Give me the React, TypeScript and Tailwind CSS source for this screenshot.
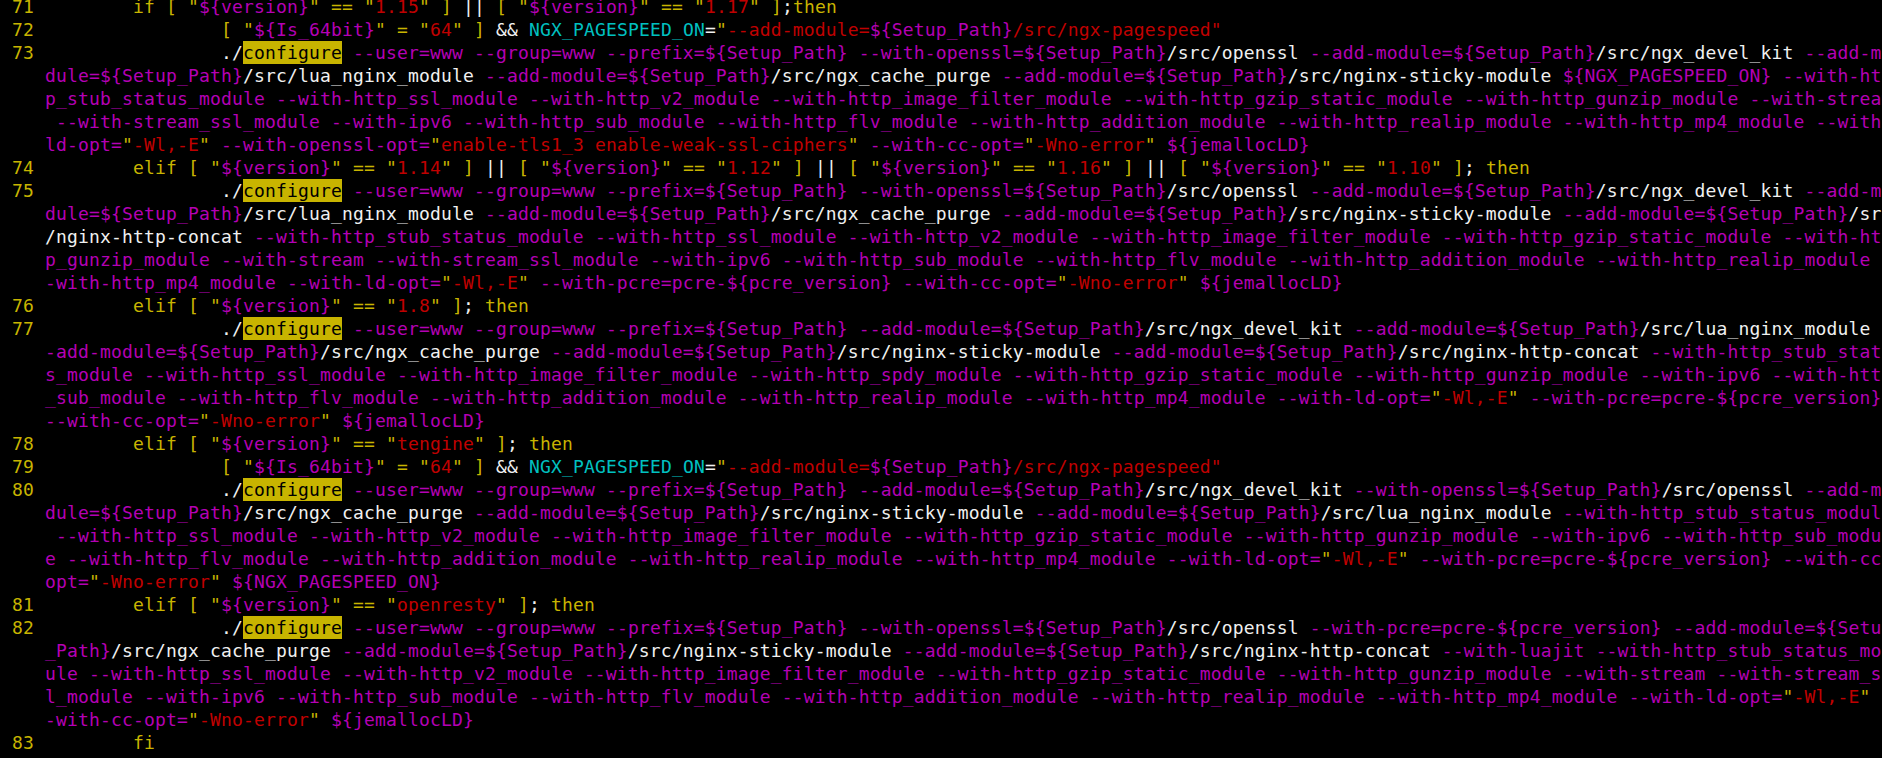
const WRAP = 168;

const common = '--user=www --group=www --prefix=${Setup_Path}';
const mod = (name: string) => `--add-module=\${Setup_Path}/src/${name}`;
const ssl = '--with-openssl=${Setup_Path}/src/openssl';
const tail = '--with-http_sub_module --with-http_flv_module --with-http_addition_module --with-http_realip_module --with-http_mp4_module --with-ld-opt="-Wl,-E"';
const pagespeed = '\t\t[ "${Is_64bit}" = "64" ] && NGX_PAGESPEED_ON="--add-module=${Setup_Path}/src/ngx-pagespeed"';

const source: [number, string][] = [
  [71, '\tif [ "${version}" == "1.15" ] || [ "${version}" == "1.17" ];then'],
  [72, pagespeed],
  [73, `\t\t./configure ${common} ${ssl} ${mod('ngx_devel_kit')} ${mod('lua_nginx_module')} ${mod('ngx_cache_purge')} ${mod('nginx-sticky-module')} \${NGX_PAGESPEED_ON} --with-http_stub_status_module --with-http_ssl_module --with-http_v2_module --with-http_image_filter_module --with-http_gzip_static_module --with-http_gunzip_module --with-stream --with-stream_ssl_module --with-ipv6 ${tail} --with-openssl-opt="enable-tls1_3 enable-weak-ssl-ciphers" --with-cc-opt="-Wno-error" \${jemallocLD}`],
  [74, '\telif [ "${version}" == "1.14" ] || [ "${version}" == "1.12" ] || [ "${version}" == "1.16" ] || [ "${version}" == "1.10" ]; then'],
  [75, `\t\t./configure ${common} ${ssl} ${mod('ngx_devel_kit')} ${mod('lua_nginx_module')} ${mod('ngx_cache_purge')} ${mod('nginx-sticky-module')} ${mod('nginx-http-concat')} --with-http_stub_status_module --with-http_ssl_module --with-http_v2_module --with-http_image_filter_module --with-http_gzip_static_module --with-http_gunzip_module --with-stream --with-stream_ssl_module --with-ipv6 ${tail} --with-pcre=pcre-\${pcre_version} --with-cc-opt="-Wno-error" \${jemallocLD}`],
  [76, '\telif [ "${version}" == "1.8" ]; then'],
  [77, `\t\t./configure ${common} ${mod('ngx_devel_kit')} ${mod('lua_nginx_module')} ${mod('ngx_cache_purge')} ${mod('nginx-sticky-module')} ${mod('nginx-http-concat')} --with-http_stub_status_module --with-http_ssl_module --with-http_image_filter_module --with-http_spdy_module --with-http_gzip_static_module --with-http_gunzip_module --with-ipv6 ${tail} --with-pcre=pcre-\${pcre_version} --with-cc-opt="-Wno-error" \${jemallocLD}`],
  [78, '\telif [ "${version}" == "tengine" ]; then'],
  [79, pagespeed],
  [80, `\t\t./configure ${common} ${mod('ngx_devel_kit')} ${ssl} ${mod('ngx_cache_purge')} ${mod('nginx-sticky-module')} ${mod('lua_nginx_module')} --with-http_stub_status_module --with-http_ssl_module --with-http_v2_module --with-http_image_filter_module --with-http_gzip_static_module --with-http_gunzip_module --with-ipv6 ${tail} --with-pcre=pcre-\${pcre_version} --with-cc-opt="-Wno-error" \${NGX_PAGESPEED_ON}`],
  [81, '\telif [ "${version}" == "openresty" ]; then'],
  [82, `\t\t./configure ${common} ${ssl} --with-pcre=pcre-\${pcre_version} ${mod('ngx_cache_purge')} ${mod('nginx-sticky-module')} ${mod('nginx-http-concat')} --with-luajit --with-http_stub_status_module --with-http_ssl_module --with-http_v2_module --with-http_image_filter_module --with-http_gzip_static_module --with-http_gunzip_module --with-stream --with-stream_ssl_module --with-ipv6 ${tail} --with-cc-opt="-Wno-error" \${jemallocLD}`],
  [83, '\tfi'],
];

const YELLOW = 'text-[#c8b400]';
const MAGENTA = 'text-[#b400b4]';
const RED = 'text-[#c00000]';
const CYAN = 'text-[#00c0c0]';
const WHITE = 'text-[#f0f0f0]';
const MATCH = 'inline-block bg-[#c8b400] text-black';

type Cell = { ch: string; cls: string };

// rough copy of vim's sh highlighting, only what these lines need
function highlight(line: string): Cell[] {
  const text = line.replace(/\t/g, '        ');
  const re = /"|\$\{[^}]*\}|--[^\s"$]*|\/src\/\S+|configure|NGX_PAGESPEED_ON|\b(?:if|elif|then|fi)\b|==|=|\[|\]|\s+|./g;
  const cells: Cell[] = [];
  let quoted = false;
  for (const m of text.matchAll(re)) {
    const tok = m[0];
    let cls = WHITE;
    if (tok === '"') {
      cls = YELLOW;
      quoted = !quoted;
    } else if (tok.startsWith('${') || tok.startsWith('--') && !quoted) cls = MAGENTA;
    else if (quoted) cls = RED;
    else if (tok === 'configure') cls = MATCH;
    else if (tok === 'NGX_PAGESPEED_ON') cls = CYAN;
    else if (/^(if|elif|then|fi|==|\[|\])$/.test(tok)) cls = YELLOW;
    else if (tok === '=') cls = text[m.index - 1] === ' ' ? YELLOW : WHITE;
    else if (!tok.trim()) cls = '';
    for (const ch of tok) cells.push({ ch, cls });
  }
  return cells;
}

function Row({ num, cells }: { num?: number; cells: Cell[] }) {
  const spans: Cell[] = [];
  for (const c of cells) {
    const last = spans[spans.length - 1];
    if (last && last.cls === c.cls) last.ch += c.ch;
    else spans.push({ ...c });
  }
  return (
    <div className="flex h-[23px] whitespace-pre leading-[23px]">
      <span className={`w-[44px] shrink-0 pl-[11px] ${YELLOW}`}>{num}</span>
      <span>
        {spans.map((s, i) => <span key={i} className={s.cls}>{s.ch}</span>)}
      </span>
    </div>
  );
}

export default function App() {
  return (
    <div className="h-[758px] w-[1882px] overflow-hidden bg-black font-['DejaVu_Sans_Mono',monospace] text-[18px] tracking-[0.16px]">
      <div className="-mt-[5px] w-[1900px] pl-[1px]">
        {source.map(([num, line]) => {
          const cells = highlight(line);
          const rows: Cell[][] = [];
          for (let i = 0; i < cells.length; i += WRAP) rows.push(cells.slice(i, i + WRAP));
          return rows.map((r, i) => <Row key={`${num}-${i}`} num={i === 0 ? num : undefined} cells={r} />);
        })}
      </div>
    </div>
  );
}
